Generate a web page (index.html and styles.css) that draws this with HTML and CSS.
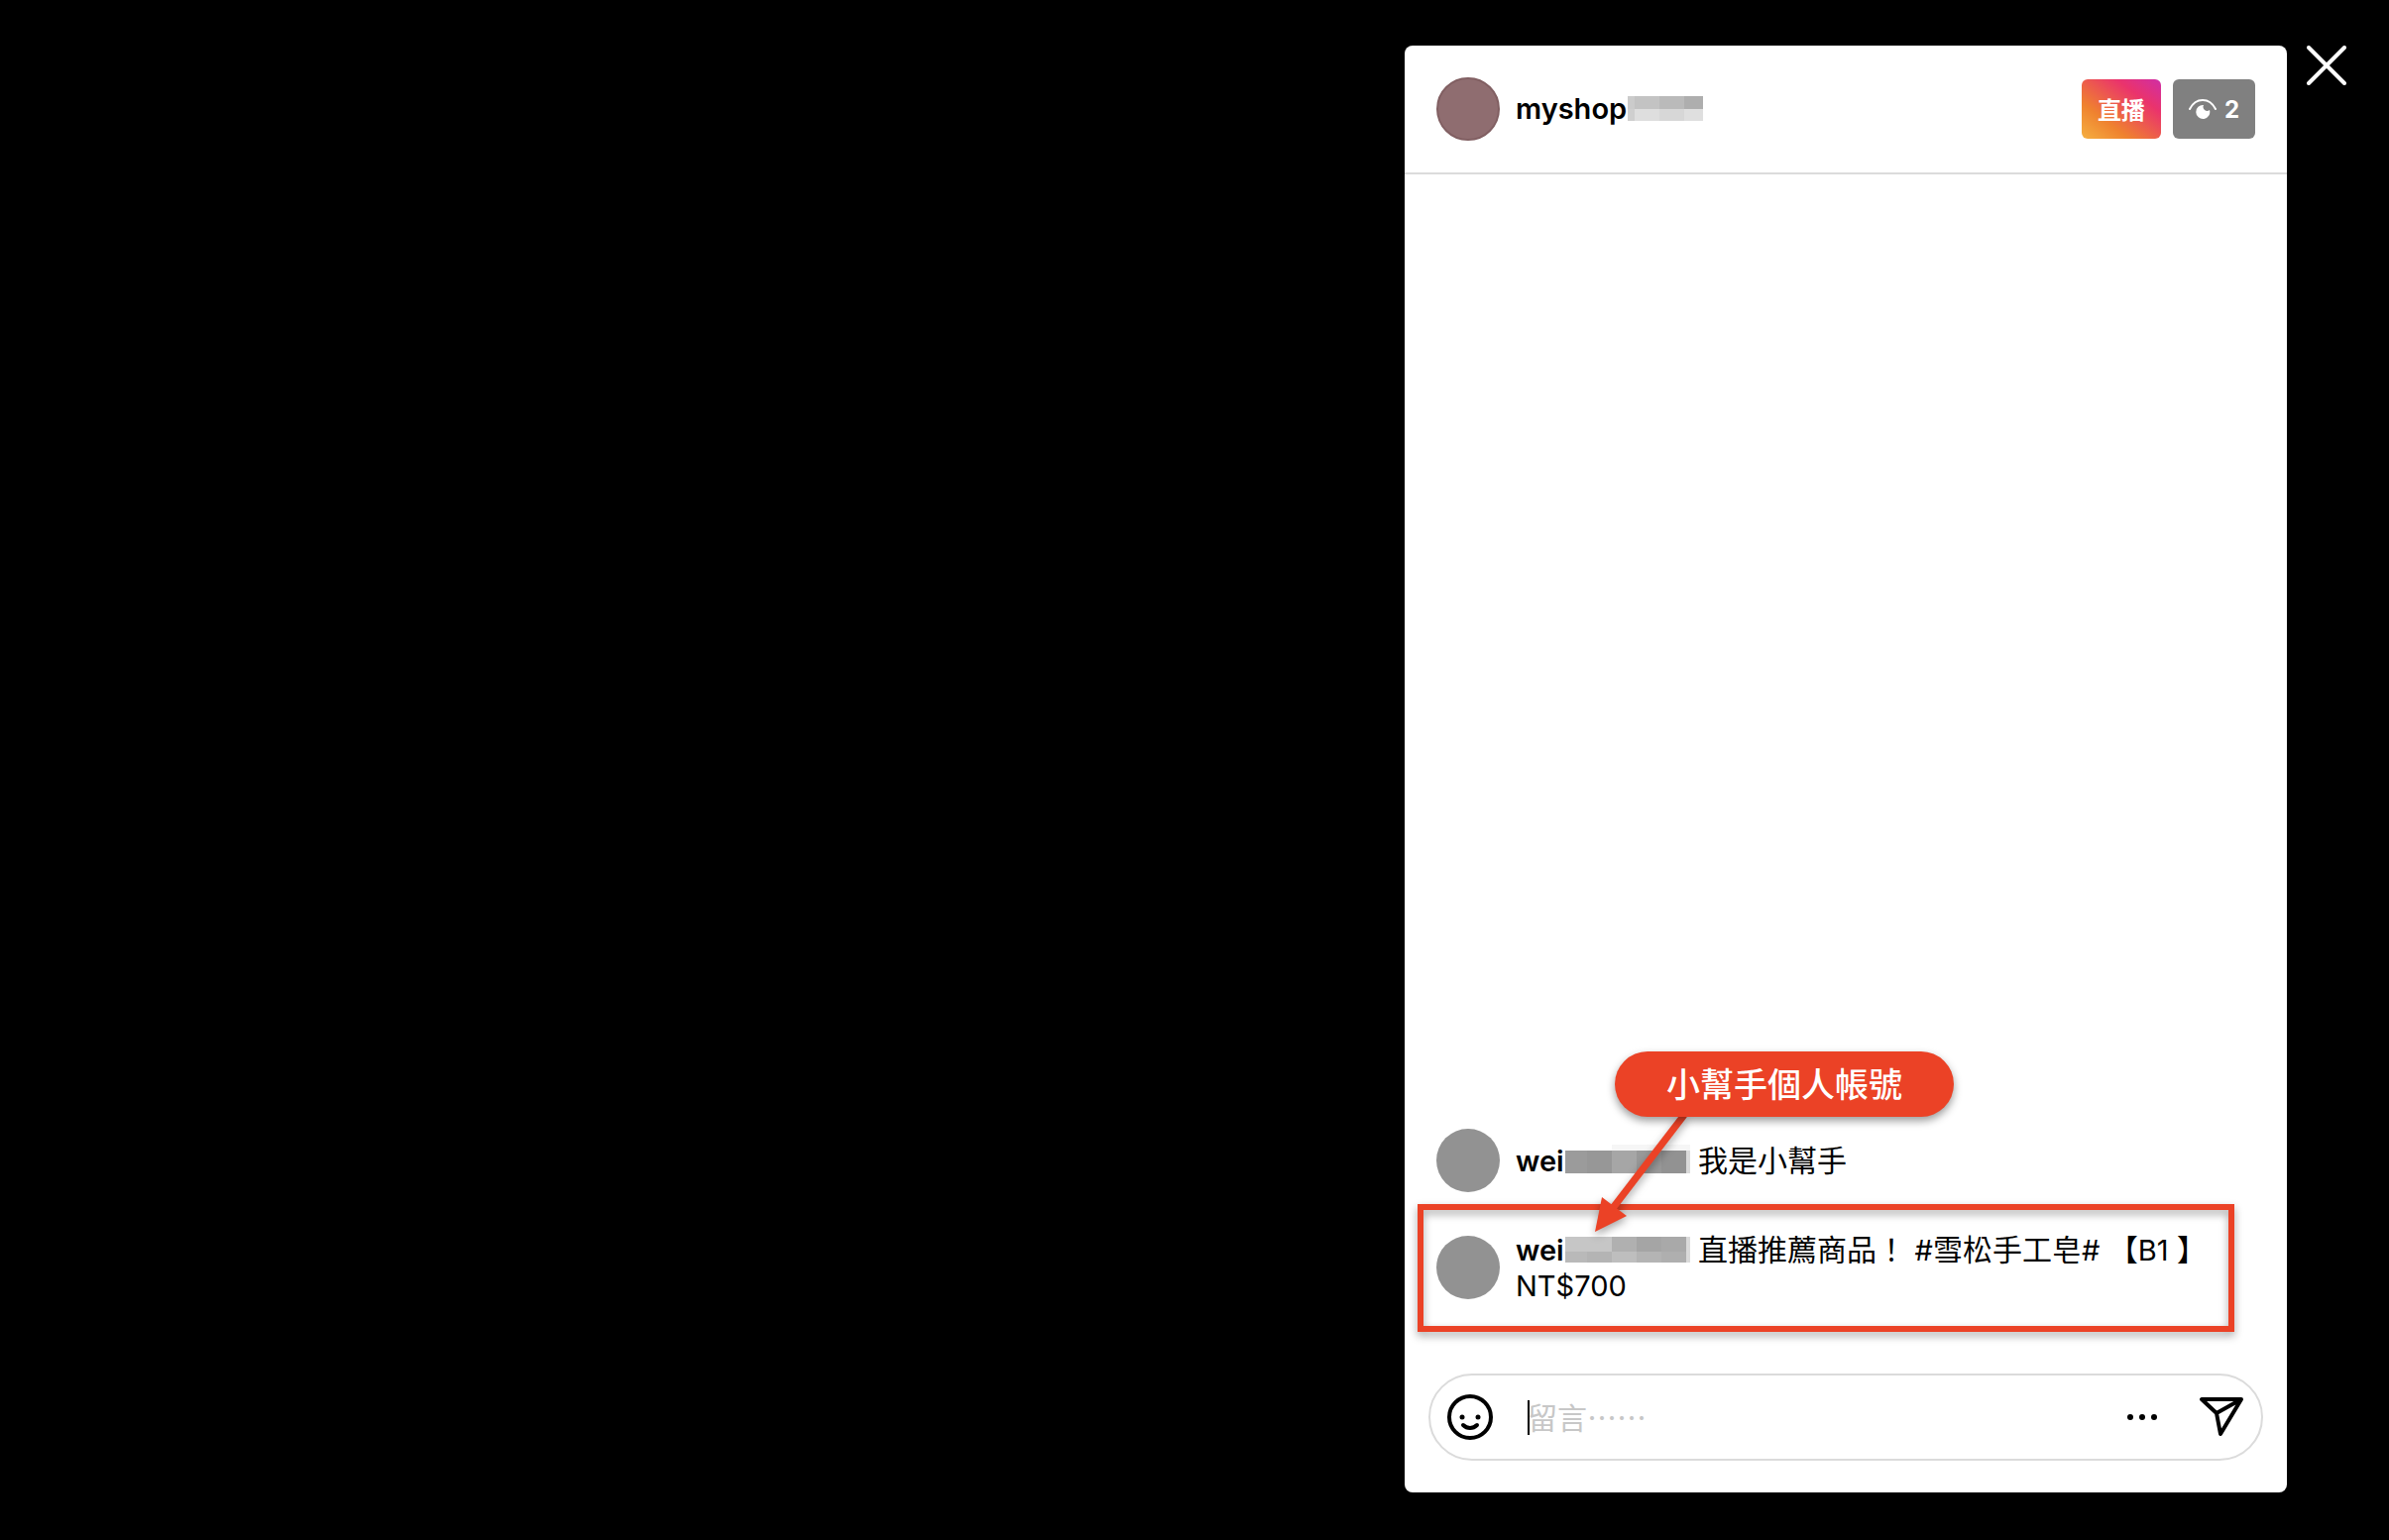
FILE: index.html
```html
<!DOCTYPE html>
<html lang="zh-Hant">
<head>
    <meta charset="UTF-8">
    <meta name="viewport" content="width=device-width, initial-scale=1.0">
    <title>直播</title>
    <link rel="stylesheet" href="styles.css">
</head>
<body>
    <div class="live">
        <div class="video"></div>
        <main class="panel">
            <header class="panel-header">
                <span class="avatar avatar-owner"></span>
                <h1 class="owner">myshop<svg class="mask" width="76" height="25" viewBox="0 0 76 25" shape-rendering="crispEdges" aria-hidden="true">
                    <rect width="7" height="13" fill="#cbcbcb"/>
                    <rect x="7" width="25" height="13" fill="#c3c3c3"/>
                    <rect x="32" width="25" height="13" fill="#bababa"/>
                    <rect x="57" width="19" height="13" fill="#aeaeae"/>
                    <rect y="13" width="7" height="12" fill="#cfcfcf"/>
                    <rect x="7" y="13" width="25" height="12" fill="#dedede"/>
                    <rect x="32" y="13" width="25" height="12" fill="#d7d7d7"/>
                    <rect x="57" y="13" width="19" height="12" fill="#dfdfdf"/>
                </svg></h1>
                <span class="badge badge-live">直播</span>
                <span class="badge badge-views">
                    <svg width="28" height="20" viewBox="0 0 28 20" aria-hidden="true">
                        <path d="M1 10C4 4 8.500 1 14 1s10 3 13 9" fill="none" stroke="#fff" stroke-width="2" stroke-linecap="round"/>
                        <path d="M15 6a4 4 0 0 0 6 5A7 7 0 1 1 15 6z" fill="#fff"/>
                    </svg>
                    2
                </span>
            </header>

            <ul class="comments">
                <li class="comment">
                    <span class="avatar"></span>
                    <p class="comment-text"><b class="name">wei<svg class="mask" width="126" height="29" viewBox="0 0 126 29" shape-rendering="crispEdges" aria-hidden="true">
                        <rect x="47" width="79" height="6" fill="#f6f6f6"/>
                        <rect y="6" width="22" height="23" fill="#9b9b9b"/>
                        <rect x="22" y="6" width="25" height="23" fill="#979797"/>
                        <rect x="47" y="6" width="25" height="23" fill="#a6a6a6"/>
                        <rect x="72" y="6" width="25" height="23" fill="#999"/>
                        <rect x="97" y="6" width="25" height="23" fill="#929292"/>
                        <rect x="122" y="6" width="4" height="23" fill="#dadada"/>
                    </svg></b> 我是小幫手</p>
                    <div class="callout">小幫手個人帳號</div>
                    <svg class="arrow" width="120" height="130" viewBox="0 0 120 130" aria-hidden="true">
                        <path d="M98 0L26 94" stroke="#eb4226" stroke-width="7"/>
                        <path d="M8 118l7-35 25 19z" fill="#eb4226"/>
                    </svg>
                </li>
                <li class="comment comment-marked">
                    <span class="avatar"></span>
                    <p class="comment-text"><b class="name">wei<svg class="mask" width="126" height="26" viewBox="0 0 126 26" shape-rendering="crispEdges" aria-hidden="true">
                        <rect width="47" height="15" fill="#c6c6c6"/>
                        <rect x="47" width="25" height="15" fill="#b0b0b0"/>
                        <rect x="72" width="25" height="15" fill="#a5a5a5"/>
                        <rect x="97" width="25" height="15" fill="#a9a9a9"/>
                        <rect y="15" width="22" height="11" fill="#b9b9b9"/>
                        <rect x="22" y="15" width="25" height="11" fill="#b4b4b4"/>
                        <rect x="47" y="15" width="25" height="11" fill="#bebebe"/>
                        <rect x="72" y="15" width="25" height="11" fill="#b4b4b4"/>
                        <rect x="97" y="15" width="25" height="11" fill="#afafaf"/>
                        <rect x="122" width="4" height="26" fill="#dadada"/>
                    </svg></b> 直播推薦商品！ <span class="latin">#</span>雪松手工皂<span class="latin">#</span> 【<span class="latin">B1</span> 】<br><span class="latin">NT$700</span></p>
                </li>
            </ul>

            <form class="composer">
                <button type="button" class="icon-button" aria-label="表情符號">
                    <svg width="46" height="46" viewBox="0 0 46 46">
                        <circle cx="23" cy="23" r="21" fill="none" stroke="#000" stroke-width="4"/>
                        <circle cx="15" cy="23" r="2.500"/>
                        <circle cx="31" cy="23" r="2.500"/>
                        <path d="M16 31c4 4 10 4 14 0" fill="none" stroke="#000" stroke-width="4" stroke-linecap="round"/>
                    </svg>
                </button>
                <span class="caret"></span>
                <input class="composer-input" type="text" aria-label="留言" placeholder="留言……">
                <button type="button" class="icon-button" aria-label="更多">
                    <svg width="32" height="46" viewBox="0 0 32 46">
                        <circle cx="4" cy="23" r="3"/>
                        <circle cx="16" cy="23" r="3"/>
                        <circle cx="28" cy="23" r="3"/>
                    </svg>
                </button>
                <button type="button" class="icon-button" aria-label="傳送">
                    <svg width="44" height="46" viewBox="0 0 44 46">
                        <path d="M2 5h40L21 40 17 19zM17 19L42 5" fill="none" stroke="#000" stroke-width="4" stroke-linejoin="round"/>
                    </svg>
                </button>
            </form>
        </main>
        <button type="button" class="icon-button close" aria-label="關閉">
            <svg width="40" height="40" viewBox="0 0 40 40">
                <path d="M2 2l36 36M38 2L2 38" stroke="#fff" stroke-width="4" stroke-linecap="round"/>
            </svg>
        </button>
    </div>
</body>
</html>
```

FILE: styles.css
```css
* {
    box-sizing: border-box;
}

body {
    margin: 0;
    background-color: #000;
    color: #000;
    font-family: Inter, "Noto Sans CJK TC", sans-serif;
    font-size: 29px;
}

.live {
    display: grid;
    grid-template-columns: 1fr minmax(0, 890px) 40px;
    column-gap: 20px;
    min-height: 100vh;
    padding: 46px 43px 48px 0;
}

.panel {
    display: flex;
    flex-direction: column;
    background-color: #fff;
    border-radius: 8px;
}

.panel-header {
    display: flex;
    align-items: center;
    padding: 32px;
    border-bottom: 2px solid #dbdbdb;
}

.avatar {
    flex: none;
    width: 64px;
    height: 64px;
    margin-right: 16px;
    border-radius: 50%;
    background-color: #929292;
}

.avatar-owner {
    background-color: #8f6d70;
    border: 2px solid #815f62;
}

.owner {
    flex: 1;
    margin: 0;
    font-size: 29px;
    font-weight: 600;
    line-height: 36px;
}

.mask {
    margin-left: 1px;
    vertical-align: -2px;
}

.badge {
    display: flex;
    align-items: center;
    height: 60px;
    padding: 0 16px;
    border-radius: 6px;
    color: #fff;
    font-size: 24px;
    font-weight: 700;
}

.badge-live {
    margin-right: 12px;
    padding-bottom: 2px;
    background: linear-gradient(to top right, #f5b041, #ef822f 30%, #ea336c 72%, #cf2ea6);
}

.badge-views {
    gap: 8px;
    background-color: #808080;
}

.comments {
    display: flex;
    flex: 1;
    flex-direction: column;
    justify-content: flex-end;
    gap: 40px;
    margin: 0;
    padding: 0 32px 71px;
    list-style: none;
}

.comment {
    position: relative;
    display: flex;
    align-items: center;
}

.comment-text {
    margin: 0;
    font-size: 30px;
    line-height: 36px;
}

.name,
.latin {
    font-size: 29px;
    line-height: 1;
}

.name {
    font-weight: 600;
}

.callout {
    position: absolute;
    z-index: 2;
    top: -78px;
    left: 180px;
    padding: 2px 52px 0;
    border-radius: 33px;
    background-color: #eb4226;
    box-shadow: 0 4px 8px rgba(0, 0, 0, 0.4);
    color: #fff;
    font-size: 34px;
    font-weight: 500;
    line-height: 64px;
    white-space: nowrap;
}

.arrow {
    position: absolute;
    z-index: 1;
    top: -14px;
    left: 152px;
    filter: drop-shadow(0 4px 4px rgba(0, 0, 0, 0.35));
}

/* frame around the highlighted comment */
.comment-marked::after {
    content: "";
    position: absolute;
    top: -28px;
    right: 21px;
    bottom: -29px;
    left: -19px;
    border: 6px solid #eb4226;
    filter: drop-shadow(0 4px 4px rgba(0, 0, 0, 0.35));
}

.composer {
    display: flex;
    align-items: center;
    height: 88px;
    margin: 0 24px 32px;
    padding: 0 18px 0 17px;
    border: 2px solid #dbdbdb;
    border-radius: 44px;
}

.icon-button {
    flex: none;
    padding: 0;
    border: 0;
    background: none;
    cursor: pointer;
}

.icon-button svg {
    display: block;
}

.caret {
    width: 2px;
    height: 35px;
    margin-left: 35px;
    background-color: #000;
}

.composer-input {
    flex: 1;
    min-width: 0;
    margin-left: -2px;
    padding: 0 0 2px;
    border: 0;
    outline: 0;
    background: none;
    font-family: "Noto Sans CJK TC", sans-serif;
    font-size: 30px;
}

.composer-input::placeholder {
    color: #c7c7c7;
    opacity: 1;
}

.composer .icon-button:last-child {
    margin-left: 42px;
}

.close {
    align-self: start;
}
```
